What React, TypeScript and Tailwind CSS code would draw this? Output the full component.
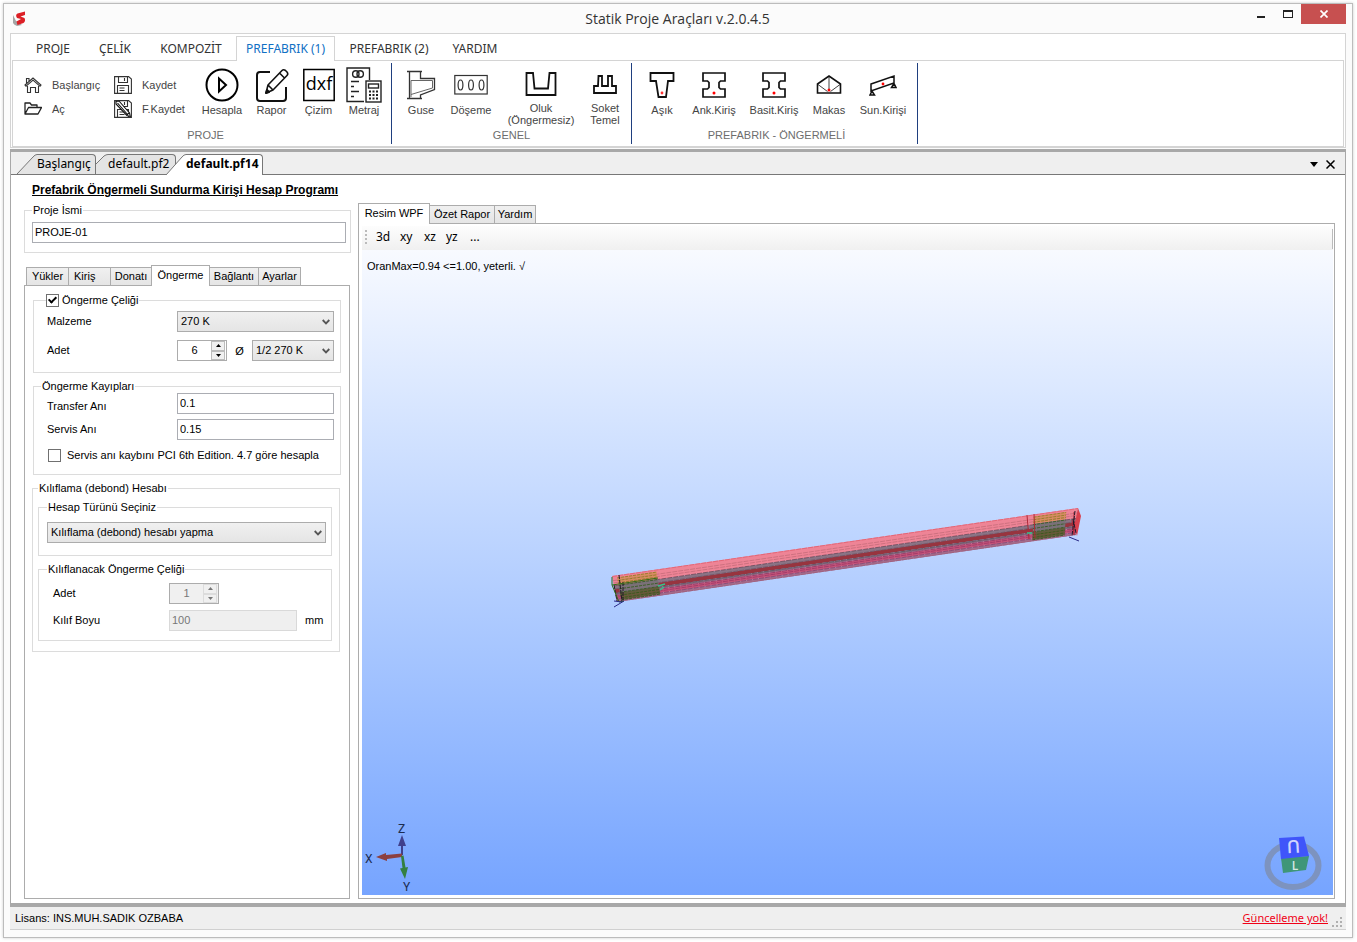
import { ReactNode } from "react";

type RibbonButtonProps = {
  icon: ReactNode;
  label: string;
  second?: string;
  width: string;
};

function RibbonButton({ icon, label, second, width }: RibbonButtonProps) {
  return (
    <button
      type="button"
      className={`flex flex-col items-center whitespace-nowrap ${width}`}
    >
      <span className="flex h-[35px] items-center justify-center">{icon}</span>
      <span className={second ? "leading-3" : "leading-4"}>
        {label}
        {second && <span className="block">{second}</span>}
      </span>
    </button>
  );
}

function SmallButton({ icon, label }: { icon: ReactNode; label: string }) {
  return (
    <button type="button" className="flex h-6 items-center gap-2.5">
      {icon}
      <span>{label}</span>
    </button>
  );
}

function RibbonGroup({
  title,
  className,
  children,
}: {
  title: string;
  className: string;
  children: ReactNode;
}) {
  return (
    <section
      className={`my-0.5 flex shrink-0 flex-col border-r border-[#1f3f7f] pt-1 pb-px ${className}`}
    >
      <div className="flex flex-1">{children}</div>
      <h2 className="h-4 pr-1 text-center leading-4 text-[#6d6d6d]">{title}</h2>
    </section>
  );
}

function HomeIcon() {
  return (
    <svg width="18" height="18" viewBox="0 0 18 18" fill="none" stroke="#333" strokeWidth="1.1">
      <path d="M1 9 9 2l8 7-1 1.200L9 4.200 2 10.200zM3.500 10v6.500h3v-5h5v5h3V10M2.500 7V2.500H5V5" />
    </svg>
  );
}

function FolderIcon() {
  return (
    <svg width="18" height="18" viewBox="0 0 18 18" fill="none" stroke="#222" strokeWidth="1.3" strokeLinejoin="round">
      <path d="M1 14V3h5l1.500 2H13v2.500M1 14l3.500-6.500h13L14 14zM5 7.500h9" />
    </svg>
  );
}

function SaveIcon({ pen }: { pen?: boolean }) {
  return (
    <svg width="18" height="18" viewBox="0 0 18 18" fill="none" stroke="#333" strokeWidth="1.1">
      <path d="M.6.6h14L17.400 3v14.400H.6zM4.500.6v5.900h9V.6M10.500 2v3M3.500 17.400V9.500h11v7.900M5.500 12h5M5.500 14.500h5" />
      {pen && (
        <>
          <path d="M2 1.500 5 1l10.500 12 .8 3.500-3.400-1L2 4z" fill="#fff" stroke="#111" />
          <path d="M3.500 3 14 15M12.500 14.500l3-1.500" stroke="#111" />
        </>
      )}
    </svg>
  );
}

function PlayIcon() {
  return (
    <svg width="34" height="34" viewBox="0 0 34 34" fill="none" stroke="#000" strokeWidth="2">
      <circle cx="17" cy="17" r="15.500" />
      <path d="M14 10.500v13l7-6.500z" />
    </svg>
  );
}

function ReportIcon() {
  return (
    <svg width="34" height="34" viewBox="0 0 34 34" fill="none" stroke="#111" strokeWidth="2" strokeLinejoin="round">
      <path d="M15 4H5Q2 4 2 7v23q0 3 3 3h23q3 0 3-3V19" />
      <path d="M11 25l2-8L27 2.500q1.500-1.500 3.500 0l1.500 1.500q1.500 2 0 3.500L18 22zM24.500 5l5 5M13 17l5 5" strokeWidth="1.600" />
      <path d="M11 25l1-3 2 2z" fill="#111" />
    </svg>
  );
}

function DxfIcon() {
  return (
    <svg width="32" height="34" viewBox="0 0 32 34">
      <rect x=".8" y="1.500" width="30.400" height="31" fill="none" stroke="#000" strokeWidth="1.500" />
      <text x="16" y="22" textAnchor="middle" fontFamily="Open Sans, sans-serif" fontSize="18">
        dxf
      </text>
    </svg>
  );
}

function MetrajIcon() {
  return (
    <svg width="36" height="36" viewBox="0 0 36 36" fill="none" stroke="#222" strokeWidth="1.400">
      <path d="M18 34.500H1V1h22.500v12" />
      <circle cx="9.800" cy="7" r="3.200" />
      <circle cx="14.200" cy="7" r="3.200" />
      <path d="M5 14.500h8M5 19.500h3M5 24.500h8M5 29.500h3" />
      <rect x="20" y="14" width="15" height="21" fill="#fff" />
      <rect x="22.500" y="17" width="10" height="4" />
      <path d="M23 24.500h10M23 28h10M23 31.500h10" strokeDasharray="2 1.500" strokeWidth="2" />
    </svg>
  );
}

function GuseIcon() {
  return (
    <svg width="30" height="30" viewBox="0 0 30 30" fill="none" stroke="#333" strokeWidth="1.300">
      <path d="M1 1.500h15M1 28.500h15M3.500 2v26M14.500 2v6.500h14v11L14.500 25v3" />
      <path d="M5 27V10.500h21.500v7.500L5 24.500" stroke="#666" strokeWidth="1" />
    </svg>
  );
}

function DosemeIcon() {
  return (
    <svg width="34" height="22" viewBox="0 0 34 22" fill="none" stroke="#333" strokeWidth="1.200">
      <rect x=".8" y="1.500" width="32.400" height="18.500" />
      <ellipse cx="6.500" cy="11" rx="2.400" ry="5" />
      <ellipse cx="17" cy="11" rx="2.400" ry="5" />
      <ellipse cx="27.500" cy="11" rx="2.400" ry="5" />
    </svg>
  );
}

function OlukIcon() {
  return (
    <svg width="32" height="26" viewBox="0 0 32 26" fill="none" stroke="#111" strokeWidth="1.800">
      <path d="M1.500 1v22h29V1h-6l-1.500 15.500H9.500L8 1z" />
    </svg>
  );
}

function SoketIcon() {
  return (
    <svg width="24" height="20" viewBox="0 0 24 20" fill="none" stroke="#111" strokeWidth="1.800">
      <path d="M1 18v-7h4l.5-10H9v10h6V1h4v10h4v7z" />
    </svg>
  );
}

function AsikIcon() {
  return (
    <svg width="26" height="28" viewBox="0 0 26 28" fill="none" stroke="#111" strokeWidth="1.800">
      <path d="M1.500 2h23v8H19l-2 16H9.500L7 10H1.500z" />
      <circle cx="13" cy="22" r="1.400" fill="#f33" stroke="none" />
    </svg>
  );
}

function KirisIcon() {
  return (
    <svg width="26" height="28" viewBox="0 0 26 28" fill="none" stroke="#111" strokeWidth="1.700">
      <path d="M2 2h22v8h-4.500L18 11.500v5l1.500 1.500H24v8H2v-8h4.500L8 16.500v-5L6.500 10H2z" />
      <circle cx="13" cy="22" r="1.500" fill="#f00" stroke="none" />
    </svg>
  );
}

function MakasIcon() {
  return (
    <svg width="26" height="22" viewBox="0 0 26 22" fill="none" stroke="#111" strokeWidth="1.600">
      <path d="M1.500 10 13 2l11.500 8v9h-23z" />
      <path d="M13 2.500v13M2 10.500l9.500 7M24 10.500l-9.500 7" strokeWidth=".8" />
      <circle cx="13" cy="16" r="1.500" fill="#f00" stroke="none" />
    </svg>
  );
}

function SundurmaIcon() {
  return (
    <svg width="28" height="22" viewBox="0 0 28 22" fill="none" stroke="#111" strokeWidth="1.500">
      <path d="M2 10 25 2v7L2 17zM3 17l-2 4h4.500zM25 9.500l-2.500 4H27z" />
      <circle cx="14" cy="10" r="1.400" fill="#f00" stroke="none" />
    </svg>
  );
}

const menuTabs = [
  { name: "PROJE", width: "w-[62px]" },
  { name: "ÇELİK", width: "w-[62px]" },
  { name: "KOMPOZİT", width: "w-[90px]" },
  { name: "PREFABRIK (1)", width: "w-[99px]" },
  { name: "PREFABRIK (2)", width: "w-[108px]" },
  { name: "YARDIM", width: "w-[64px]" },
];

function Ribbon() {
  return (
    <div className="border border-[#d4d4d4] bg-white px-px text-[11px] text-[#444]">
      <nav className="relative z-10 -mb-px flex h-[27px] items-end pl-2.5 font-['Noto_Sans'] text-[12px] text-[#333]">
        {menuTabs.map((tab) => (
          <button
            key={tab.name}
            type="button"
            className={`h-[25px] shrink-0 whitespace-nowrap text-center ${tab.width} ${
              tab.name === "PREFABRIK (1)"
                ? "border border-b-0 border-[#d4d4d4] bg-white text-[#1070c4]"
                : ""
            }`}
          >
            {tab.name}
          </button>
        ))}
      </nav>
      <div className="flex h-[87px] overflow-hidden border border-[#d4d4d4]">
        <RibbonGroup title="PROJE" className="w-[379px] pl-[11px]">
          <div className="flex w-[90px] flex-col pt-1.5">
            <SmallButton icon={<HomeIcon />} label="Başlangıç" />
            <SmallButton icon={<FolderIcon />} label="Aç" />
          </div>
          <div className="flex w-[83px] flex-col pt-1.5">
            <SmallButton icon={<SaveIcon />} label="Kaydet" />
            <SmallButton icon={<SaveIcon pen />} label="F.Kaydet" />
          </div>
          <RibbonButton icon={<PlayIcon />} label="Hesapla" width="w-[50px]" />
          <RibbonButton icon={<ReportIcon />} label="Rapor" width="w-[49px]" />
          <RibbonButton icon={<DxfIcon />} label="Çizim" width="w-[45px]" />
          <RibbonButton icon={<MetrajIcon />} label="Metraj" width="w-[46px]" />
        </RibbonGroup>
        <RibbonGroup title="GENEL" className="w-[240px] pl-1">
          <RibbonButton icon={<GuseIcon />} label="Guse" width="w-[50px]" />
          <RibbonButton icon={<DosemeIcon />} label="Döşeme" width="w-[50px]" />
          <RibbonButton icon={<OlukIcon />} label="Oluk" second="(Öngermesiz)" width="w-[90px]" />
          <RibbonButton icon={<SoketIcon />} label="Soket" second="Temel" width="w-[38px]" />
        </RibbonGroup>
        <RibbonGroup title="PREFABRIK - ÖNGERMELİ" className="w-[286px] pl-2">
          <RibbonButton icon={<AsikIcon />} label="Aşık" width="w-[44px]" />
          <RibbonButton icon={<KirisIcon />} label="Ank.Kiriş" width="w-[60px]" />
          <RibbonButton icon={<KirisIcon />} label="Basit.Kiriş" width="w-[60px]" />
          <RibbonButton icon={<MakasIcon />} label="Makas" width="w-[50px]" />
          <RibbonButton icon={<SundurmaIcon />} label="Sun.Kirişi" width="w-[58px]" />
        </RibbonGroup>
      </div>
    </div>
  );
}

function TitleBar() {
  return (
    <header className="flex h-[29px] items-start">
      <svg className="mt-1.5 ml-2 shrink-0" width="16" height="18" viewBox="0 0 16 18">
        <path d="M1 5v8q1 2 4 3l5-1-6-4z" fill="#a5a5a5" />
        <path d="M13 1.500 5.500 3.500Q3 5 5 8l4 1-4.500 2.500 1 3.500 6-2q2.500-2 1-5L8.500 6.500 13 5z" fill="#dc2026" />
      </svg>
      <h1 className="flex-1 pt-[3px] pl-[79px] text-center font-['Open_Sans'] text-[14px] leading-6 text-[#333]">
        Statik Proje Araçları v.2.0.4.5
      </h1>
      <button type="button" aria-label="Küçült" className="flex h-5 w-[26px] items-center justify-center">
        <svg width="8" height="14" viewBox="0 0 8 14">
          <path d="M0 9h8v2H0z" fill="#222" />
        </svg>
      </button>
      <button type="button" aria-label="Büyüt" className="flex h-5 w-[27px] items-center justify-center">
        <svg width="10" height="8" viewBox="0 0 10 8">
          <path d="M0 0h10v8H0zM1 2v5h8V2z" fill="#222" fillRule="evenodd" />
        </svg>
      </button>
      <button type="button" aria-label="Kapat" className="mr-1.5 flex h-5 w-[45px] items-center justify-center bg-[#c75050]">
        <svg width="8" height="8" viewBox="0 0 8 8" stroke="#fff" strokeWidth="1.700">
          <path d="M.5.5l7 7M7.500.5l-7 7" />
        </svg>
      </button>
    </header>
  );
}

function DocumentTabs() {
  return (
    <div className="flex h-[23px] items-end border-b border-[#777] bg-[#efefef] pl-1.5 font-['Noto_Sans'] text-[12px] text-black">
      <button type="button" className="flex h-5 shrink-0">
        <svg width="20" height="20" viewBox="0 0 20 20">
          <path d="M0 20 16 3Q18 .5 20 .5V20z" fill="#e4e4e4" />
          <path d="M0 20 16 3Q18 .5 20 .5" fill="none" stroke="#777" />
        </svg>
        <span className="h-5 w-[59px] rounded-tr border-t border-r border-[#777] bg-[#e4e4e4] text-left leading-[18px] whitespace-nowrap">
          Başlangıç
        </span>
      </button>
      <button type="button" className="flex h-5 shrink-0">
        <svg width="12" height="20" viewBox="0 0 12 20">
          <path d="M0 10 8 2Q10 .5 12 .5V20H0z" fill="#e4e4e4" />
          <path d="M0 10 8 2Q10 .5 12 .5" fill="none" stroke="#777" />
        </svg>
        <span className="h-5 w-[68px] rounded-tr border-t border-r border-[#777] bg-[#e4e4e4] text-left leading-[18px] whitespace-nowrap">
          default.pf2
        </span>
      </button>
      <button type="button" className="relative -mb-px -ml-2.5 flex h-[21px] shrink-0">
        <svg width="20" height="21" viewBox="0 0 20 21">
          <path d="M0 21 16 3Q18 .5 20 .5V21z" fill="#fff" />
          <path d="M0 21 16 3Q18 .5 20 .5" fill="none" stroke="#777" />
        </svg>
        <span className="h-[21px] w-[77px] rounded-tr border-t border-r border-[#777] bg-white text-left leading-[18px] font-bold whitespace-nowrap">
          default.pf14
        </span>
      </button>
      <div className="mr-2.5 ml-auto flex h-full items-center gap-2 pt-0.5">
        <button type="button" aria-label="Açık belgeler">
          <svg width="8" height="5" viewBox="0 0 8 5">
            <path d="M0 0h8L4 5z" />
          </svg>
        </button>
        <button type="button" aria-label="Belgeyi kapat">
          <svg width="9" height="9" viewBox="0 0 9 9" stroke="#000" strokeWidth="1.500">
            <path d="M.5.5l8 8M8.500.5l-8 8" />
          </svg>
        </button>
      </div>
    </div>
  );
}

function Group({ legend, className, children }: { legend: ReactNode; className: string; children: ReactNode }) {
  return (
    <fieldset className={`min-w-0 border border-[#dcdcdc] ${className}`}>
      <legend className="h-3.5 px-px leading-3.5 whitespace-nowrap">{legend}</legend>
      {children}
    </fieldset>
  );
}

function Select({ id, value, className, label }: { id: string; value: string; className: string; label?: string }) {
  return (
    <span className={`relative block ${className}`}>
      <select
        id={id}
        aria-label={label}
        className="block h-[21px] w-full appearance-none border border-[#acacac] bg-linear-to-b from-[#f0f0f0] to-[#e5e5e5] pl-[3px] text-black"
      >
        <option>{value}</option>
      </select>
      <svg
        className="pointer-events-none absolute top-2 right-1"
        width="8"
        height="6"
        viewBox="0 0 8 6"
        fill="none"
        stroke="#555"
        strokeWidth="1.800"
      >
        <path d="M.7 1 4 4.400 7.300 1" />
      </svg>
    </span>
  );
}

function Spinner({ id, value, disabled }: { id: string; value: number; disabled?: boolean }) {
  return (
    <span
      className={`flex h-[21px] w-[50px] border border-[#acacac] pr-px ${
        disabled ? "bg-[#f0f0f0] text-[#777]" : "bg-white"
      }`}
    >
      <input
        id={id}
        type="text"
        inputMode="numeric"
        defaultValue={value}
        disabled={disabled}
        className="w-[33px] min-w-0 text-center outline-none"
      />
      <span className="flex flex-1 flex-col">
        {["M0 3h5L2.500 0z", "M0 0h5L2.500 3z"].map((arrow, i) => (
          <button
            key={arrow}
            type="button"
            disabled={disabled}
            aria-label={i === 0 ? "Artır" : "Azalt"}
            className={`flex flex-1 items-center justify-center border bg-[#f0f0f0] ${
              disabled ? "border-[#dcdcdc]" : "border-[#bcbcbc]"
            }`}
          >
            <svg width="5" height="3" viewBox="0 0 5 3">
              <path d={arrow} fill={disabled ? "#777" : "#000"} />
            </svg>
          </button>
        ))}
      </span>
    </span>
  );
}

const inputClass = "block h-[21px] w-full border border-[#abadb3] bg-white px-0.5 pb-0.5 text-black";

const formTabs = [
  { name: "Yükler", width: "w-[43px]" },
  { name: "Kiriş", width: "w-[43px]" },
  { name: "Donatı", width: "w-[42px]" },
  { name: "Öngerme", width: "w-[59px]" },
  { name: "Bağlantı", width: "w-[50px]" },
  { name: "Ayarlar", width: "w-[43px]" },
];

function FormPanel() {
  return (
    <div className="flex w-[327px] shrink-0 flex-col">
      <h2 className="mb-1 h-4 pl-2 text-[12px] leading-3.5 font-bold whitespace-nowrap underline">
        Prefabrik Öngermeli Sundurma Kirişi Hesap Programı
      </h2>
      <Group legend={<label htmlFor="proje">Proje İsmi</label>} className="h-[50px] pr-1 pl-[7px]">
        <input id="proje" defaultValue="PROJE-01" className={`mt-[5px] ${inputClass}`} />
      </Group>

      <div className="relative z-10 mt-3 -mb-px flex h-[21px] items-end pl-0.5">
        {formTabs.map((tab) =>
          tab.name === "Öngerme" ? (
            <button
              key={tab.name}
              type="button"
              className={`-mr-px h-[21px] border border-b-0 border-[#acacac] bg-white pb-0.5 ${tab.width}`}
            >
              {tab.name}
            </button>
          ) : (
            <button
              key={tab.name}
              type="button"
              className={`-mr-px h-[19px] border border-[#acacac] bg-linear-to-b from-[#f0f0f0] to-[#e5e5e5] ${
                tab.name === "Kiriş" ? "pl-[5px] text-left" : ""
              } ${tab.width}`}
            >
              {tab.name}
            </button>
          )
        )}
      </div>

      <div className="mr-px flex-1 border border-[#acacac] px-2 pt-[7px]">
        <Group
          className="h-20 pr-1.5 pl-[13px]"
          legend={
            <label className="-ml-0.5 flex items-center gap-[3px]">
              <input
                type="checkbox"
                defaultChecked
                className="grid size-[13px] appearance-none place-items-center border border-[#707070] before:mb-0.5 before:hidden before:h-[8px] before:w-[5px] before:rotate-45 before:border-r-2 before:border-b-2 before:border-black checked:before:block"
              />
              Öngerme Çeliği
            </label>
          }
        >
          <div className="mt-1 grid grid-cols-[130px_1fr] items-center gap-y-2">
            <label htmlFor="malzeme">Malzeme</label>
            <Select id="malzeme" value="270 K" className="w-full" />
            <label htmlFor="adet">Adet</label>
            <div className="flex items-center">
              <Spinner id="adet" value={6} />
              <span className="w-[25px] pt-0.5 text-center">Ø</span>
              <Select id="cap" label="Çap" value="1/2 270 K" className="flex-1" />
            </div>
          </div>
        </Group>

        <Group legend="Öngerme Kayıpları" className="mt-1.5 h-24 pr-1.5 pl-[7px]">
          <div className="grid grid-cols-[130px_1fr] items-center gap-y-[5px] pl-1.5">
            <label htmlFor="transfer" className="self-end">Transfer Anı</label>
            <input id="transfer" defaultValue="0.1" className={inputClass} />
            <label htmlFor="servis">Servis Anı</label>
            <input id="servis" defaultValue="0.15" className={inputClass} />
          </div>
          <label className="mt-[7px] flex items-center gap-1.5 pl-[7px] whitespace-nowrap">
            <input type="checkbox" className="size-[13px] appearance-none border border-[#707070] bg-white" />
            Servis anı kaybını PCI 6th Edition. 4.7 göre hesapla
          </label>
        </Group>

        <Group legend="Kılıflama (debond) Hesabı" className="mt-1.5 -ml-px mr-px h-[171px] pr-[7px] pl-[5px]">
          <Group legend={<label htmlFor="hesap">Hesap Türünü Seçiniz</label>} className="mt-[5px] h-14 pr-[5px] pl-2">
            <Select id="hesap" value="Kılıflama (debond) hesabı yapma" className="mt-2 w-full" />
          </Group>
          <Group legend="Kılıflanacak Öngerme Çeliği" className="mt-1.5 h-[79px] pr-[5px] pl-2">
            <div className="mt-[7px] grid grid-cols-[116px_128px_1fr] items-center gap-y-1.5 pl-1.5">
              <label htmlFor="kilif-adet">Adet</label>
              <Spinner id="kilif-adet" value={1} disabled />
              <span />
              <label htmlFor="kilif-boyu">Kılıf Boyu</label>
              <input
                id="kilif-boyu"
                defaultValue="100"
                disabled
                className="h-[21px] w-full border border-[#d9d9d9] bg-[#efefef] px-0.5 pb-0.5 text-[#777]"
              />
              <span className="pl-2">mm</span>
            </div>
          </Group>
        </Group>
      </div>
    </div>
  );
}

// Point on the beam: u runs along its length, v from the top edge to the bottom one
function at(u: number, v: number) {
  const x = 612 + 5 * v + u * (466 - 7 * v);
  const y = 576 + 26 * v + u * (-68 + v);
  return `${x.toFixed(1)},${y.toFixed(1)}`;
}

function strip(u0: number, u1: number, v0: number, v1: number) {
  return `${at(u0, v0)} ${at(u1, v0)} ${at(u1, v1)} ${at(u0, v1)}`;
}

const strips = [
  { from: 0, to: 0.38, color: "#ee8496" },
  { from: 0.38, to: 0.5, color: "#8a7485" },
  { from: 0.5, to: 0.66, color: "#98343f" },
  { from: 0.66, to: 0.74, color: "#86667a" },
  { from: 0.74, to: 0.9, color: "#c4557a" },
  { from: 0.9, to: 1, color: "#a56c8c" },
];

const rebars = [
  { v: 0.02, color: "#e06070" },
  { v: 0.18, color: "#c56c7a" },
  { v: 0.27, color: "#c56c7a" },
  { v: 0.38, color: "#6d4452" },
  { v: 0.5, color: "#6c5464" },
  { v: 0.67, color: "#5e5262" },
  { v: 0.75, color: "#8d3a64" },
  { v: 0.82, color: "#9c3566" },
  { v: 0.9, color: "#84406c" },
  { v: 0.98, color: "#a0607c" },
];

function Cage({ from, to }: { from: number; to: number }) {
  return (
    <g>
      <polygon points={strip(from, to, 0.08, 0.36)} fill="#d0904c" fillOpacity=".65" />
      <polygon points={strip(from, to, 0.36, 0.66)} fill="#7a7078" />
      <polygon points={strip(from, to, 0.66, 0.94)} fill="#5c5c30" fillOpacity=".85" />
      {[0.1, 0.2, 0.29, 0.38, 0.52, 0.65, 0.76, 0.86, 0.94].map((v) => (
        <polyline
          key={v}
          points={`${at(from, v)} ${at(to, v)}`}
          fill="none"
          stroke={v > 0.3 ? "#2e5a18" : "#8a7a20"}
          strokeWidth=".8"
          strokeDasharray="3 1"
        />
      ))}
    </g>
  );
}

function Beam() {
  return (
    <svg className="absolute top-[250px] left-[238px]" width="500" height="115" viewBox="600 500 500 115">
      {strips.map((s) => (
        <polygon key={s.from} points={strip(0, 1, s.from, s.to)} fill={s.color} />
      ))}
      {rebars.map((r) => (
        <polyline
          key={r.v}
          points={`${at(0, r.v)} ${at(1, r.v)}`}
          stroke={r.color}
          strokeWidth=".8"
          strokeDasharray="5 1"
          fill="none"
        />
      ))}
      <Cage from={0.01} to={0.095} />
      <Cage from={0.905} to={0.975} />
      <path d="M1078 508l3 8-4 20-3-9 2-9z" fill="#d8404e" />
      <path d="M1074 512v23M1072 520l2 15M1027 515l2 24M1034 514l1 24" stroke="#b02838" fill="none" />
      <path d="M1075 511l-3 25M1073 519l3 14M619 575l3 27M623 582v18M614 585l3 16" stroke="#23182a" strokeDasharray="4 1" fill="none" />
      <path d="M612 577v8l7 17 5-1M612 585l46-7" stroke="#2f6a18" fill="none" />
      <path d="M1069 537l10 4M614 607l10-6M614 601l8 1" stroke="#2a2a88" fill="none" />
      <path d="M658 586l7-2M660 590l4-3M1027 533h5" stroke="#35c48c" strokeWidth="1.500" fill="none" />
    </svg>
  );
}

function Axes() {
  return (
    <svg
      className="absolute bottom-0 left-0"
      width="60"
      height="76"
      viewBox="362 819 60 76"
      fontFamily="Roboto, sans-serif"
      fontSize="12"
    >
      <path d="M401 855v-9h-3l4-11 4 11h-3v9z" fill="#40408c" />
      <path d="M402 853.500 386 855v-2l-10 4 11 4v-2l15-2z" fill="#8c4040" />
      <path d="M401 856l1.500 12-2.500.5 5 10.500 3-12-2.500.5-2-12z" fill="#348040" />
      <g fill="#1c2c50">
        <text x="398" y="833">Z</text>
        <text x="365" y="863">X</text>
        <text x="403" y="891">Y</text>
      </g>
    </svg>
  );
}

function ViewCube() {
  return (
    <svg
      className="absolute right-[3px] bottom-0"
      width="70"
      height="65"
      viewBox="1260 830 70 65"
      fontFamily="Open Sans, sans-serif"
      textAnchor="middle"
      fill="#fff"
    >
      <ellipse cx="1293" cy="865.500" rx="25.500" ry="21.500" fill="none" stroke="#7d93bf" strokeWidth="6" />
      <path d="M1281 858l28-2-3 14-23 3z" fill="#3f9678" />
      <path d="M1279 838l25-1.500 5 19.500-28 3z" fill="#3f55fa" />
      <text fontSize="18" fontWeight="600" fillOpacity=".75" transform="translate(1293 840) rotate(177)">
        U
      </text>
      <text x="1295" y="870" fontSize="12" fontWeight="600" fillOpacity=".8">
        L
      </text>
    </svg>
  );
}

function ViewPanel() {
  return (
    <div className="mt-5 flex min-w-0 flex-1 flex-col">
      <div className="relative z-10 -mb-px flex h-[21px] items-end">
        <button type="button" className="h-[21px] w-[72px] border border-b-0 border-[#acacac] bg-white pb-0.5">
          Resim WPF
        </button>
        <button type="button" className="-ml-px h-[19px] w-[66px] border border-[#acacac] bg-linear-to-b from-[#f0f0f0] to-[#e5e5e5]">
          Özet Rapor
        </button>
        <button type="button" className="-ml-px h-[19px] w-[42px] border border-[#acacac] bg-linear-to-b from-[#f0f0f0] to-[#e5e5e5]">
          Yardım
        </button>
      </div>
      <div className="flex flex-1 flex-col border border-[#acacac] pt-0.5 pr-px pb-[3px] pl-[3px]">
        <div className="flex h-6 items-center bg-linear-to-b from-[#fdfdfd] to-[#f0f0f0] pb-0.5 pl-[3px] font-['Noto_Sans'] text-[12px]">
          <span className="mr-[9px] h-[14px] border-l-2 border-dotted border-[#bbb]" />
          <button type="button" className="w-6 text-left">3d</button>
          <button type="button" className="w-6 text-left">xy</button>
          <button type="button" className="w-[22px] text-left">xz</button>
          <button type="button" className="w-6 text-left">yz</button>
          <button type="button">...</button>
          <span className="mt-1 ml-auto h-5 border-r border-[#bbb]" />
        </div>
        <div className="relative min-h-[400px] flex-1 overflow-hidden bg-linear-to-b from-[#f8faff] to-[#76a4ff]">
          <p className="pt-2 pl-[5px] leading-4">OranMax=0.94 &lt;=1.00, yeterli. √</p>
          <Beam />
          <Axes />
          <ViewCube />
        </div>
      </div>
    </div>
  );
}

function StatusBar() {
  return (
    <footer className="flex h-[23px] items-center border-b border-[#d0d0d0] bg-[#efefef] pt-px pr-0.5 pl-[5px]">
      <span>Lisans: INS.MUH.SADIK OZBABA</span>
      <a href="#guncelleme" className="ml-auto font-['Noto_Sans'] text-[11px] text-[#f00016] underline">
        Güncelleme yok!
      </a>
      <svg className="mt-2 ml-1" width="12" height="12" viewBox="0 0 12 12" fill="#b0b0b0">
        <path d="M8 0h2v2H8zM4 4h2v2H4zM8 4h2v2H8zM0 8h2v2H0zM4 8h2v2H4zM8 8h2v2H8z" />
      </svg>
    </footer>
  );
}

export default function App() {
  return (
    <div className="flex min-h-screen flex-col bg-white pt-[3px] pr-1 pb-1 pl-[3px] font-['Liberation_Sans',sans-serif] text-[11px] text-black">
      <div className="flex flex-1 flex-col border border-[#bcbcbc] bg-[#fbfbfb] shadow-[0_0_3px_#ccc]">
        <TitleBar />
        <div className="mx-1.5 mb-[7px] flex flex-1 flex-col">
          <Ribbon />
          <main className="mt-px flex flex-1 flex-col border-x border-t-3 border-b-4 border-[#a8a8a8] bg-white">
            <DocumentTabs />
            <div className="flex flex-1 gap-[7px] pt-2 pr-2.5 pb-1 pl-[13px]">
              <FormPanel />
              <ViewPanel />
            </div>
          </main>
          <StatusBar />
        </div>
      </div>
    </div>
  );
}
